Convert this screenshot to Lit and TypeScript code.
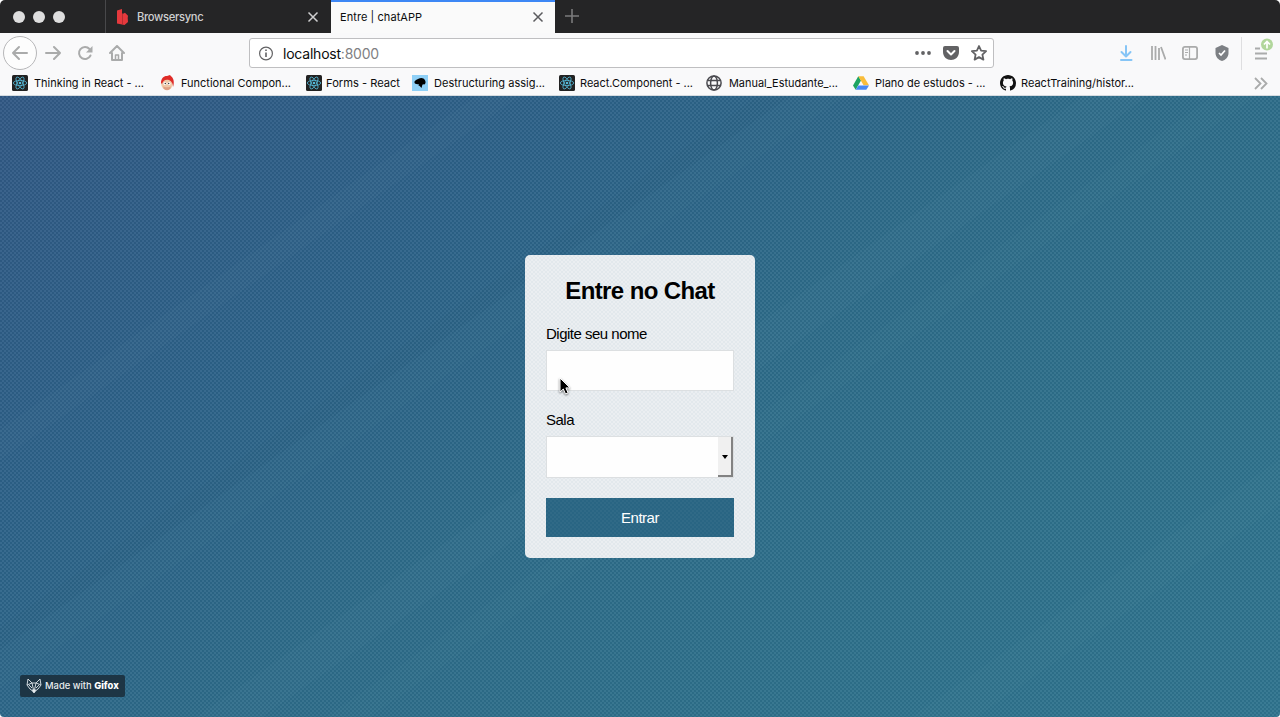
import { LitElement, html, css, svg } from "lit";
import { customElement } from "lit/decorators.js";

const react = html`<svg width="16" height="16" viewBox="0 0 16 16"><rect width="16" height="16" rx="1.5" fill="#222"/><g fill="none" stroke="#55b9d8" stroke-width=".8"><ellipse cx="8" cy="8" rx="6.7" ry="2.6"/><ellipse cx="8" cy="8" rx="6.7" ry="2.6" transform="rotate(60 8 8)"/><ellipse cx="8" cy="8" rx="6.7" ry="2.6" transform="rotate(120 8 8)"/></g><circle cx="8" cy="8" r="1.3" fill="#55b9d8"/></svg>`;
const face = html`<svg width="16" height="16" viewBox="0 0 16 16"><ellipse cx="7" cy="9" rx="5.800" ry="6" fill="#f0c9a8"/><path d="M1 8C1 3 4 .8 7 1l3-1 1 1.200C14 3 14.500 8 13 12c0-3-1-5.500-4-7C6 4 3 5 2 9z" fill="#df2b27"/><path d="M3 11.500c2 1 6 1 8 0l-1 2.500q-3 2.500-6 0z" fill="#e0a184"/><circle cx="5" cy="8.500" r="1.500" fill="#fff"/><circle cx="9" cy="8.500" r="1.500" fill="#fff"/><circle cx="5.300" cy="8.500" r=".7" fill="#333"/><circle cx="8.700" cy="8.500" r=".7" fill="#333"/></svg>`;
const dino = html`<svg width="16" height="16" viewBox="0 0 16 16"><path fill="#8fd0f7" d="M0 0h16v16H0z"/><path d="M2.500 6.500C4 4.500 6 4.600 7 3.600c2-1 5-.5 6 1.600.9 1.800.7 3-.3 4-1 .5-1.500 0-2 .2-.8 1-.6 2.500-1.400 3.600-.5-1.200-1.500-2.200-3-2.500l1-1C5 9.300 3.500 9 2.500 8z"/></svg>`;
const globe = html`<svg width="16" height="16" viewBox="0 0 16 16" fill="none" stroke="#4a4a4f" stroke-width="1.500"><circle cx="8" cy="8" r="7.100"/><ellipse cx="8" cy="8" rx="3.400" ry="7.100"/><path d="M1.500 5.500h13M1.500 10.500h13" stroke-width="1.300"/></svg>`;
const drive = html`<svg width="16" height="16" viewBox="0 0 16 16"><path fill="#1da462" d="M5.300 1.200 0 10.500l2.700 4.300L8 5.600z"/><path fill="#f9bd3b" d="M5.300 1.200h5.300L16 10.300h-5.400z"/><path fill="#4688f4" d="M5.300 10.400H16l-2.700 4.400H2.700z"/></svg>`;
const github = html`<svg width="16" height="16" viewBox="0 0 16 16"><path fill="#111" d="M8 0C3.580 0 0 3.580 0 8c0 3.540 2.290 6.530 5.470 7.590.4.070.55-.17.55-.38 0-.19-.01-.82-.01-1.490-2.010.37-2.530-.49-2.690-.94-.09-.23-.48-.94-.82-1.130-.28-.15-.68-.52-.01-.53.63-.01 1.080.58 1.230.82.72 1.210 1.870.87 2.330.66.070-.52.28-.87.51-1.070-1.780-.2-3.640-.89-3.640-3.950 0-.87.31-1.590.82-2.150-.08-.2-.36-1.020.08-2.120 0 0 .67-.21 2.200.82.64-.18 1.320-.27 2-.27s1.360.09 2 .27c1.530-1.040 2.200-.82 2.200-.82.44 1.100.16 1.920.08 2.120.51.56.82 1.270.82 2.150 0 3.070-1.870 3.750-3.650 3.950.29.25.54.73.54 1.480 0 1.070-.01 1.930-.01 2.200 0 .21.15.46.55.38A8.010 8.010 0 0 0 16 8c0-4.420-3.580-8-8-8"/></svg>`;
const close = html`<svg width="12" height="12" viewBox="0 0 12 12" fill="none" stroke="currentColor" stroke-width="1.500"><path d="m1.500 1.500 9 9m0-9-9 9"/></svg>`;

const bookmarks = [
  { icon: react, label: "Thinking in React - ...", w: 110, gap: 6 },
  { icon: face, label: "Functional Compon...", w: 110, gap: 5 },
  { icon: react, label: "Forms - React", w: 74, gap: 4 },
  { icon: dino, label: "Destructuring assig...", w: 111, gap: 6 },
  { icon: react, label: "React.Component - ...", w: 113, gap: 5 },
  { icon: globe, label: "Manual_Estudante_...", w: 109, gap: 7 },
  { icon: drive, label: "Plano de estudos - ...", w: 110.500, gap: 6 },
  { icon: github, label: "ReactTraining/histor...", w: 113, gap: 5 },
];

@customElement("app-root")
export class AppRoot extends LitElement {
  static styles = css`
    :host { display: flex; flex-direction: column; width: 1280px; height: 717px; overflow: hidden; position: relative; font-family: Inter, sans-serif; color: #000; background: #fff; }
    * { box-sizing: border-box; }
    svg { display: block; flex: none; }
    .tabs { height: 33px; background: #252526; display: flex; flex: none; border-top-left-radius: 5px; border-top-right-radius: 5px; }
    .lights { width: 105px; display: flex; gap: 8px; padding: 11px 0 0 13px; }
    .lights i { width: 12px; height: 12px; border-radius: 50%; background: #dedede; }
    .tab { display: flex; align-items: center; font-size: 11px; color: #cfcfd0; }
    .tab1 { width: 226px; border-left: 1px solid #48484a; padding: 1px 12px 0 11px; }
    .tab1 .name { margin-left: 9px; flex: 1; font-size: 11.200px; letter-spacing: -.32px; font-weight: 500; }
    .tab2 { width: 224px; background: #fafafa; color: #0c0c0d; border-top: 2px solid #3d87f5; padding: 0 11px 1px 9px; }
    .tab2 .name { flex: 1; letter-spacing: .07px; }
    .tab2 svg { color: #5b5b5e; }
    .plus { padding: 9px 0 0 10px; color: #7b7b7c; }
    .nav { height: 40px; background: #f9f9fa; display: flex; align-items: center; flex: none; color: #aaabab; }
    .back { width: 34px; height: 34px; margin-left: 3px; border-radius: 50%; border: 1px solid #b7b7b9; background: #fdfdfd; display: grid; place-items: center; }
    .forward { margin-left: 8px; }
    .reload { margin-left: 16px; }
    .home { margin-left: 16px; }
    .url { margin-left: 124px; width: 745px; height: 30px; border: 1px solid #bfbfc1; border-radius: 3px; background: #fff; display: flex; align-items: center; padding: 0 6px 0 9px; color: #626264; font-size: 14px; }
    .address { margin-left: 9px; flex: 1; color: #0c0c0d; padding-top: 1px; letter-spacing: -.22px; }
    .address span { color: #7f7f83; }
    .pocket { margin: 0 12px; }
    .tools { display: flex; align-items: center; margin-left: 124px; gap: 16px; }
    .menu { border-left: 1px solid #dedee0; height: 33px; margin-left: 11px; padding: 0 0 0 12px; }
    .marks { height: 23px; background: #f9f9fa; display: flex; flex: none; padding-left: 12px; border-bottom: 1px solid #d5dbe0; }
    .mark { display: flex; width: 147px; padding-top: 2px; white-space: nowrap; }
    .mark.first { width: 148px; } .mark.second { width: 146px; } .mark.third { width: 106px; }
    .more { margin-left: auto; padding: 4px 12px 0 0; }
    .page {
      flex: 1; min-height: 0; display: flex; justify-content: center; padding-top: 159px;
      border-radius: 0 0 4px 4px;
      background:
        repeating-conic-gradient(#ffffff0e 0 25%, #00000009 0 50%) 0 0 / 4px 4px,
        linear-gradient(145deg, #fff0 22%, #ffffff04 22% 24%, #fff0 24% 35%, #00000004 35% 36.500%, #ffffff03 36.500% 39%, #fff0 39% 50%, #ffffff04 50% 53%, #fff0 53% 56%, #ffffff03 56% 58%, #fff0 58% 83%, #ffffff03 83% 86%, #fff0 86%),
        linear-gradient(145deg, #315884 0%, #2c6188 28%, #2d6b89 50%, #2e708b 75%, #2f738e 100%);
      font-family: "Liberation Sans", Arial, sans-serif;
    }
    .card { width: 230px; height: 303px; border-radius: 5px; background: repeating-conic-gradient(#fff3 0 25%, #c8d8e020 0 50%) 0 0 / 4px 4px, #e6eaee; padding: 21px; display: flex; flex-direction: column; }
    h1 { margin: 0; font-size: 24px; line-height: 30px; letter-spacing: -.6px; text-align: center; }
    label { font-size: 15px; line-height: 20px; letter-spacing: -.5px; }
    .label1 { margin-top: 18px; }
    .label2 { margin-top: 19px; }
    .field { height: 41px; margin-top: 6px; border: 1px solid #dcdfe1; background: #fefefe; }
    .select { height: 42px; display: flex; justify-content: flex-end; }
    .arrow { width: 15px; height: 40px; background: #f0f0f0; border-right: 2px solid #828282; border-bottom: 2px solid #828282; display: grid; place-items: center; padding-top: 2px; }
    .enter { margin-top: 20px; height: 39px; flex: none; border: 0; padding: 0; background: repeating-conic-gradient(#ffffff08 0 25%, #0000 0 50%) 0 0 / 4px 4px, #296583; color: #fff; font: 15px "Liberation Sans", Arial, sans-serif; letter-spacing: -.5px; }
    .pointer { position: absolute; left: 558px; top: 377px; filter: drop-shadow(0 1px 1px #0008); }
    .made { position: absolute; left: 20px; top: 675px; width: 105px; height: 22px; border-radius: 2px; background: #1d3545; color: #e9edef; display: flex; align-items: center; padding: 0 0 1px 6px; gap: 3px; font: 500 9.400px Inter, sans-serif; white-space: nowrap; }
    .made b { font-weight: 800; color: #fff; }
  `;

  private text(label: string, w: number) {
    return svg`<text x="0" y="12" font-size="11" fill="#0c0c0d" textLength=${w} lengthAdjust="spacingAndGlyphs">${label}</text>`;
  }

  render() {
    return html`
      <div class="tabs">
        <div class="lights"><i></i><i></i><i></i></div>
        <div class="tab tab1">
          <svg width="11" height="16" viewBox="0 0 11 16"><path fill="#e5393d" d="M0 1.500 5 0v4.500l1 .3 2-1 3 3-.3 2.200.3 4L7.500 16 0 14.500z"/><path d="M5.500 5v10" stroke="#b62e31"/></svg>
          <span class="name">Browsersync</span>${close}
        </div>
        <div class="tab tab2"><span class="name">Entre | chatAPP</span>${close}</div>
        <div class="plus"><svg width="14" height="14" viewBox="0 0 14 14" stroke="currentColor" stroke-width="1.600"><path d="M7 0v14M0 7h14"/></svg></div>
      </div>
      <div class="nav">
        <div class="back"><svg width="18" height="16" viewBox="0 0 18 16" fill="none" stroke="currentColor" stroke-width="2" stroke-linecap="round" stroke-linejoin="round"><path d="M16 8H2m6-6L2 8l6 6"/></svg></div>
        <svg class="forward" width="16" height="16" viewBox="0 0 16 16" fill="none" stroke="currentColor" stroke-width="2" stroke-linecap="round" stroke-linejoin="round"><path d="M1 8h14M9 2l6 6-6 6"/></svg>
        <svg class="reload" width="16" height="16" viewBox="0 0 16 16" fill="none" stroke="currentColor" stroke-width="2" stroke-linecap="round"><path d="M13.500 10.500A6 6 0 1 1 12.500 4"/><path d="M15.500 1v6.500H9z" fill="currentColor" stroke="none"/></svg>
        <svg class="home" width="16" height="16" viewBox="0 0 16 16" fill="none" stroke="currentColor" stroke-width="2" stroke-linecap="round" stroke-linejoin="round"><path d="m1 8 7-7 7 7M3 8v7h10V8"/><path d="M6.500 15v-5h3v5" stroke-width="1.500"/></svg>
        <div class="url">
          <svg width="15" height="15" viewBox="0 0 15 15" fill="none" stroke="currentColor"><circle cx="7" cy="7.500" r="6.400" stroke-width="1.200"/><path d="M7 6.500V11M7 3.600v1.500" stroke-width="1.600"/></svg>
          <div class="address">localhost<span>:8000</span></div>
          <svg width="16" height="16" viewBox="0 0 16 16" fill="currentColor"><circle cx="2" cy="8" r="1.900"/><circle cx="8" cy="8" r="1.900"/><circle cx="14" cy="8" r="1.900"/></svg>
          <svg class="pocket" width="16" height="16" viewBox="0 0 16 16"><path fill="currentColor" d="M2 1h12q2 0 2 2v4c0 5-4 8-8 8S0 12 0 7V3q0-2 2-2"/><path d="m4.500 6 3.500 3.500L11.500 6" fill="none" stroke="#fff" stroke-width="2" stroke-linecap="round" stroke-linejoin="round"/></svg>
          <svg width="16" height="16" viewBox="0 0 16 16" fill="none" stroke="currentColor" stroke-width="1.800" stroke-linejoin="round"><path d="m8 1 2.100 4.600 5 .6-3.700 3.400 1 5L8 12.100l-4.400 2.500 1-5L.9 6.200l5-.6z"/></svg>
        </div>
        <div class="tools">
          <svg width="16" height="16" viewBox="0 0 16 16" fill="none" stroke="#86c5f6" stroke-width="2" stroke-linecap="round" stroke-linejoin="round"><path d="M8 1v10M3.500 7 8 11.500 12.500 7M3 15h10.500"/></svg>
          <svg width="16" height="16" viewBox="0 0 16 16" fill="none" stroke="currentColor" stroke-width="1.800"><path d="M2 1v14M5.500 1v14M9 3v12M11 2l4.500 12.500"/></svg>
          <svg width="16" height="16" viewBox="0 0 16 16" fill="none" stroke="currentColor" stroke-width="1.800"><rect x=".9" y="1.900" width="14.200" height="12.200" rx="2"/><path d="M7.500 2v12M3 5h3M3 7.500h3M3 10h2" stroke-width="1.200"/></svg>
          <svg width="16" height="16" viewBox="0 0 16 16"><path fill="#7d8084" d="m8 0 6.500 3v5c0 4-3 7-6.500 8-3.500-1-6.500-4-6.500-8V3z"/><path d="m5 8 2 2 4-4.500" fill="none" stroke="#fff" stroke-width="1.700"/></svg>
        </div>
        <div class="menu"><svg width="20" height="30" viewBox="0 0 20 30"><path d="M1 11.500h5M1 16.500h12M1 21.500h12" stroke="#aaabab" stroke-width="2"/><circle cx="13" cy="7.500" r="6" fill="#b1d69b"/><path d="M13 11.500v-7M10 7.500l3-3 3 3" fill="none" stroke="#fff" stroke-width="1.700"/></svg></div>
      </div>
      <div class="marks">
        ${bookmarks.map((b, i) => html`<div class="mark ${["first", "second", "third"][i] ?? ""}">${b.icon}<svg style="margin-left:${b.gap}px" width=${b.w + 1} height="16">${this.text(b.label, b.w)}</svg></div>`)}
        <div class="more"><svg width="14" height="14" viewBox="0 0 14 14" fill="none" stroke="#aaabab" stroke-width="1.800"><path d="m1 1 5.500 5.500L1 12M7 1l5.500 5.500L7 12"/></svg></div>
      </div>
      <main class="page">
        <form class="card">
          <h1>Entre no Chat</h1>
          <label class="label1">Digite seu nome</label><div class="field"></div>
          <label class="label2">Sala</label><div class="field select"><div class="arrow"><svg width="6" height="4"><path d="M0 0h6L3 4z"/></svg></div></div>
          <button type="button" class="enter">Entrar</button>
        </form>
      </main>
      <svg class="pointer" width="13" height="19" viewBox="0 0 13 19"><path d="M2 1v14l3.300-3 2.200 5 2.600-1.100-2.200-5H12z" stroke="#fff"/></svg>
      <div class="made"><svg width="16" height="16" viewBox="0 0 16 16" fill="none" stroke="#cfd7dc"><path d="M2 1 1 7l3 4 4 3 4-3 3-4-1-6-4 4H6zM1 7l5-2 2 9 2-9 5 2M3 7l3 3M13 7l-3 3"/><path d="m6 12 2 3 2-3z" fill="#fff"/></svg><span>Made with <b>Gifox</b></span></div>
    `;
  }
}
